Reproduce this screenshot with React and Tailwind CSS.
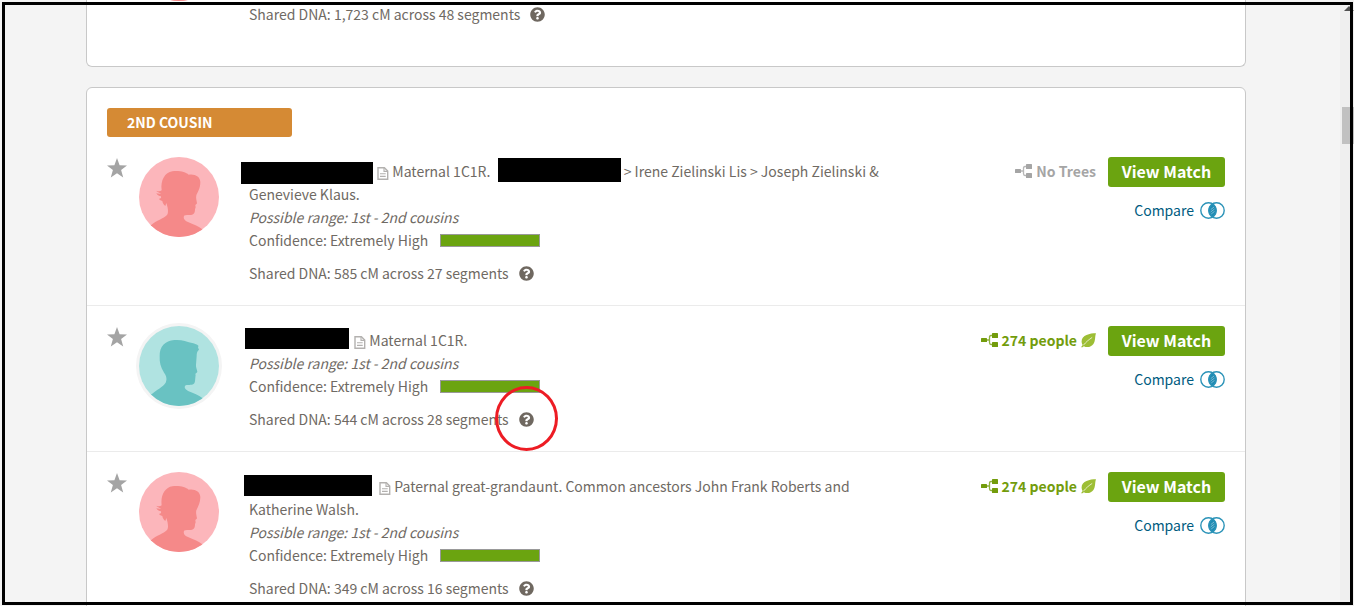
import { FaQuestionCircle } from 'react-icons/fa';

const matches = [
  {
    id: 1,
    avatar: 'female',
    nameWidth: 'w-[125px]',
    mark: '-left-2 top-0 w-[132px] h-[22px]',
    note: (
      <>
        Maternal 1C1R. <span className="inline-block relative w-[123px] h-3 ml-1"><span className="absolute left-0 -bottom-[5px] w-full h-6 bg-black" /></span> &gt; Irene Zielinski Lis &gt; Joseph Zielinski &amp; Genevieve Klaus.
      </>
    ),
    cm: 585,
    segments: 27,
    people: 0
  },
  {
    id: 2,
    avatar: 'male',
    ring: true,
    nameWidth: 'w-[102px]',
    mark: '-left-1 -top-[3px] w-[104px] h-[21px]',
    note: 'Maternal 1C1R.',
    cm: 544,
    segments: 28,
    people: 274,
    circled: true
  },
  {
    id: 3,
    avatar: 'female',
    nameWidth: 'w-[127px]',
    mark: '-left-[5px] -top-0.5 w-[128px] h-[21px]',
    note: 'Paternal great-grandaunt. Common ancestors John Frank Roberts and Katherine Walsh.',
    cm: 349,
    segments: 16,
    people: 274
  }
];

const FemaleAvatar = ({ className = '' }) => (
  <svg viewBox="0 0 240 240" className={`w-20 h-20 rounded-full shrink-0 bg-[#fcb6bb] ${className}`} aria-hidden="true">
    <path
      fill="#f58989"
      d="M20 240 L36 205 C52 190 74 185 84 174 C90 166 86 150 82 138 L79 147 C74 143 71 138 70 132 C64 130 61 128 60 125 C66 125 67 122 66 118 C59 117 55 114 52 109 C59 111 64 111 67 109 C60 107 54 105 52 101 C58 104 64 103 68 100 C64 70 78 46 100 43 C120 40 140 45 149 53 C167 50 184 58 184 76 C184 93 177 104 172 115 C170 124 173 131 174 139 C174 142 169 142 169 145 L170 151 L168 157 C168 166 166 173 156 174 C148 175 138 173 135 177 C132 186 138 191 147 195 C163 202 178 207 189 216 L215 240 Z"
    />
  </svg>
);

const MaleAvatar = ({ className = '' }) => (
  <svg viewBox="0 0 240 240" className={`w-20 h-20 rounded-full shrink-0 bg-[#b0e3e1] ${className}`} aria-hidden="true">
    <path
      fill="#69c2c2"
      d="M20 240 L36 206 C54 190 72 183 80 170 C86 157 80 147 74 138 C65 124 61 108 62 91 C61 62 78 44 106 42 C128 40 143 47 156 50 C166 52 174 54 179 60 C175 63 178 66 180 71 C174 76 173 82 173 90 L171 116 C170 124 174 129 175 137 C174 141 170 141 169 144 C171 148 169 151 169 155 C168 161 169 166 166 172 C160 179 150 176 140 178 C134 183 138 191 149 196 C164 202 179 207 190 216 L215 240 Z"
    />
  </svg>
);

const StarIcon = () => (
  <svg viewBox="0 0 20 20" className="w-5 h-5" fill="#a4a4a4" aria-hidden="true">
    <path d="M10 0 L12.6 7.3 L20 7.5 L14.1 12.1 L16.2 19.5 L10 15.2 L3.8 19.5 L5.9 12.1 L0 7.5 L7.4 7.3 Z" />
  </svg>
);

const TreeIcon = () => (
  <svg viewBox="0 0 17 14" className="w-[17px] h-3.5" aria-hidden="true">
    <path d="M5 7 H8 M12 2.5 H10 Q8.5 2.5 8.5 4.5 V9.5 Q8.5 11.5 10 11.5 H12" fill="none" stroke="currentColor" strokeWidth="1.3" opacity="0.8" />
    <rect x="0" y="5" width="6" height="4" rx="0.6" fill="currentColor" />
    <rect x="11" y="0" width="6" height="5" rx="0.6" fill="currentColor" />
    <rect x="11" y="9" width="6" height="5" rx="0.6" fill="currentColor" />
  </svg>
);

const LeafIcon = () => (
  <svg viewBox="0 0 15 15" className="w-[15px] h-[15px]" aria-hidden="true">
    <path d="M15 0.3 C9 0.3 0.6 2 0.6 8.5 C0.6 10.2 1.2 11 1.6 12 L0.2 14 L1 14.6 L2.9 13.2 C6 15 10.4 14 12.4 11 C14.6 8 13.8 3.5 15 0.3 Z" fill="#9dbe35" />
    <path d="M2.4 12.2 C5 9 8 6.5 11.2 4.4" fill="none" stroke="#fff" strokeWidth="0.7" />
  </svg>
);

const NoteIcon = () => (
  <svg viewBox="0 0 12 13" className="inline-block w-3 h-[13px] align-[-3px]" fill="none" stroke="#b3b1af" aria-hidden="true">
    <path d="M1 0.8 H7.4 L10.7 4 V12.2 H1 Z" strokeWidth="1.4" />
    <path d="M7 1 V4.4 H10.6 M3 6.8 H8.7 M3 9.4 H8.7" strokeWidth="1.1" />
  </svg>
);

const CompareIcon = () => (
  <svg viewBox="0 0 25 17" className="w-[25px] h-[17px]" aria-hidden="true">
    <path d="M12.5 1.6 C18 5 18 12 12.5 15.4 C7 12 7 5 12.5 1.6 Z" fill="#1f8bb3" />
    <circle cx="8.5" cy="8.5" r="7.7" fill="none" stroke="#2b93b8" strokeWidth="1.4" />
    <circle cx="16.5" cy="8.5" r="7.7" fill="none" stroke="#2b93b8" strokeWidth="1.4" />
    <path d="M10.8 7.6 L14 5 M10.6 10 L14.5 7 M11.2 12 L14.5 9.4" stroke="#b5dbe8" strokeWidth="0.6" />
  </svg>
);

const SharedDna = ({ cm, segments, circled }) => (
  <p className="flex items-center gap-2.5">
    <span>Shared DNA: {cm} cM across {segments} segments</span>
    <button type="button" aria-label="About shared DNA" className="relative text-[#6f6860]">
      <FaQuestionCircle size={15} />
      {circled && (
        <span className="absolute -left-6 -top-[26px] w-[63px] h-[65px] rounded-[50%] border-3 border-[#ed1c24]" />
      )}
    </button>
  </p>
);

const MatchRow = ({ match }) => (
  <article className="flex items-start p-5 border-b border-[#ebebeb]">
    <button type="button" aria-label="Star this match" className="mt-px mr-3">
      <StarIcon />
    </button>
    {match.avatar === 'male' ? (
      <MaleAvatar className={match.ring ? 'ring-3 ring-[#f4f4f4]' : ''} />
    ) : (
      <FemaleAvatar />
    )}

    {/* Match details */}
    <div className="flex-1 ml-[30px] pt-[3px]">
      <p>
        {/* Hidden name */}
        <span className={`inline-block relative h-[15px] ${match.nameWidth}`}>
          <span className={`absolute bg-black ${match.mark}`} />
        </span>{' '}
        <NoteIcon /> {match.note}
      </p>
      <p className="italic">Possible range: 1st - 2nd cousins</p>
      <p className="flex items-center gap-3">
        Confidence: Extremely High
        <span className="w-[100px] h-[13px] bg-[#6ba410] border border-[#999]" />
      </p>
      <div className="mt-2.5">
        <SharedDna cm={match.cm} segments={match.segments} circled={match.circled} />
      </div>
    </div>

    {/* Tree and actions */}
    <div className="w-80 shrink-0 flex flex-col items-end">
      <div className="flex items-start gap-3">
        {match.people > 0 ? (
          <a href="#tree" className="flex items-center gap-1 h-7 font-bold text-[#739c0c]">
            <TreeIcon />
            <span>{match.people} people</span>
            <LeafIcon />
          </a>
        ) : (
          <span className="flex items-center gap-1 h-7 font-bold text-[#a5a5a5]">
            <TreeIcon />
            <span>No Trees</span>
          </span>
        )}
        <button type="button" className="w-[117px] h-[30px] rounded-[3px] bg-[#6ba410] text-white text-base leading-7 pb-0.5 font-bold">
          View Match
        </button>
      </div>
      <a href="#compare" className="flex items-center gap-1.5 mt-3 text-[#005b80]">
        Compare
        <CompareIcon />
      </a>
    </div>
  </article>
);

const App = () => {
  return (
    <div className="relative flex h-screen overflow-hidden bg-[#f4f4f4] text-[#6f6a64] text-[14px] leading-[23px] font-['Noto_Sans_CJK_SC',sans-serif]">
      <main className="flex-1 pl-[86px] pr-[94px]">
        <section className="flex items-start h-[67px] px-5 bg-white border border-t-0 border-[#c8c8c8] rounded-b-md">
          <FemaleAvatar className="ml-8 -mt-[79px]" />
          <div className="ml-[30px] pt-[3px]">
            <SharedDna cm="1,723" segments={48} />
          </div>
        </section>

        <section className="mt-5 pt-5 bg-white border border-[#c8c8c8] rounded-md">
          <h2 className="ml-5 w-[185px] h-[29px] pl-5 rounded-[3px] bg-[#d58a34] text-white font-bold leading-[29px]">
            2ND COUSIN
          </h2>
          {matches.map((match) => (
            <MatchRow key={match.id} match={match} />
          ))}
        </section>
      </main>

      {/* Scrollbar */}
      <div className="w-3.5 flex flex-col items-end bg-[#efefef]" aria-hidden="true">
        <svg viewBox="0 0 10 6" className="mt-1.5 w-2.5 h-1.5" fill="#505050">
          <path d="M5 0 L10 5 H0 Z" />
        </svg>
        <div className="mt-[95px] w-3 h-[37px] bg-[#c1c1c1]" />
      </div>

      {/* Frame over the whole window */}
      <div className="absolute left-0.5 top-0.5 right-px bottom-px border-3 border-black pointer-events-none" />
    </div>
  );
};

export default App;
